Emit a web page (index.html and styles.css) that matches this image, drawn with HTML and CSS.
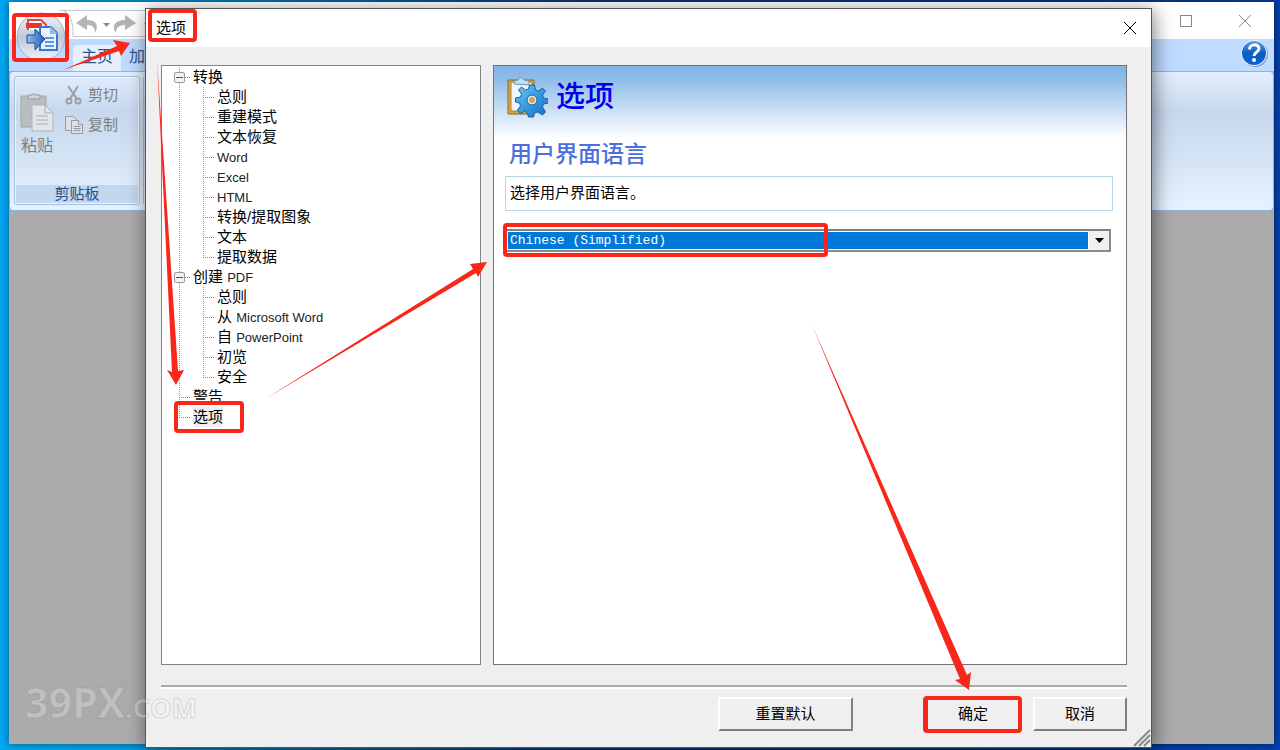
FILE: index.html
```
<!DOCTYPE html>
<html lang="zh-CN">
<head>
    <meta charset="UTF-8">
    <meta name="viewport" content="width=device-width, initial-scale=1.0">
    <title>选项</title>
    <link rel="stylesheet" href="styles.css">
</head>
<body>
    <div class="window">
        <header class="titlebar">
            <svg class="quick-bar" width="140" height="34" viewBox="0 0 140 34">
                <path d="M0 6.500H130M4 6.500Q15 10 14 32.500H140" fill="none" stroke="#c4c8ce"/>
                <path d="M17 19l11-8v5c10 0 12 6 8 13 0-6-3-8-8-8v5z" fill="#b4b4b4"/>
                <path d="M44 19h7l-3.500 4z" fill="#8b8b8b"/>
                <path d="M77 19l-11-8v5c-10 0-14 6-9 13 0-6 4-8 9-8v5z" fill="#b4b4b4"/>
                <path d="M85 19h6l-3 4z" fill="#8b8b8b"/>
            </svg>
            <button class="win-button" type="button" aria-label="最大化">
                <svg width="14" height="14"><rect x="1.500" y="1.500" width="11" height="11" fill="none" stroke="#888"/></svg>
            </button>
            <button class="win-button" type="button" aria-label="关闭">
                <svg width="14" height="14"><path d="M1 1l12 12M13 1L1 13" stroke="#888"/></svg>
            </button>
        </header>
        <nav class="tabs">
            <a class="tab active" href="#home">主页</a>
            <a class="tab" href="#advanced">加载</a>
            <button class="help" type="button" aria-label="帮助">
                <svg width="28" height="28" viewBox="0 0 28 28">
                    <defs>
                        <linearGradient id="helpFill" x1="0" y1="0" x2="0" y2="1">
                            <stop offset="0" stop-color="#5aa0e4"/>
                            <stop offset=".5" stop-color="#0a5cc4"/>
                            <stop offset="1" stop-color="#0a62d0"/>
                        </linearGradient>
                    </defs>
                    <circle cx="15" cy="15" r="13" fill="#8a9bb5"/>
                    <circle cx="14" cy="14" r="13" fill="#e8f1fc"/>
                    <circle cx="14" cy="14" r="12" fill="url(#helpFill)"/>
                    <path d="M9.500 10.500c0-6 9.500-6 9.500-1 0 4-5 3.500-5 7.500" fill="none" stroke="#fff" stroke-width="3"/>
                    <circle cx="14" cy="21" r="2" fill="#fff"/>
                </svg>
            </button>
        </nav>
        <section class="ribbon">
            <div class="group">
                <div class="group-tools">
                    <button class="tool paste" type="button">
                        <svg width="34" height="40" viewBox="0 0 34 40">
                            <path d="M1 4h25v31H1z" fill="#b9bcc0" stroke="#a3a6aa"/>
                            <path d="M8 7V3h4q2-3 4 0h4v4z" fill="#cfd2d6" stroke="#96999d"/>
                            <path d="M12 13h13l8 8v18H12z" fill="#e3e7ec" stroke="#aeb2b8"/>
                            <path d="M25 13v8h8M16 24h12M16 28h12M16 32h12" fill="none" stroke="#a9adb4"/>
                        </svg>
                        <span>粘贴</span>
                    </button>
                    <div class="tool-list">
                        <button class="tool" type="button">
                            <svg width="20" height="20" viewBox="0 0 20 20" fill="none" stroke="#9a9da3" stroke-width="2">
                                <path d="M4 1l9 13M14 1L6 14"/>
                                <circle cx="5" cy="16" r="2.500"/>
                                <circle cx="14" cy="16" r="2.500"/>
                            </svg>
                            <span>剪切</span>
                        </button>
                        <button class="tool" type="button">
                            <svg width="20" height="20" viewBox="0 0 20 20" fill="#dde1e7" stroke="#989ca2">
                                <path d="M1.500 1.500h8l4 4v10h-12z"/>
                                <path d="M7.500 5.500h7l4 4v9h-11z"/>
                                <path d="M14.500 5.500v4h4M9.500 11.500h7M9.500 13.500h7M9.500 15.500h7"/>
                            </svg>
                            <span>复制</span>
                        </button>
                    </div>
                </div>
                <div class="group-name">剪贴板</div>
            </div>
            <div class="group rest"></div>
        </section>
        <main class="workspace"></main>
        <button class="app-button" type="button" aria-label="应用程序菜单">
            <svg width="50" height="50" viewBox="0 0 50 50">
                <defs>
                    <linearGradient id="orb" x1="0" y1="0" x2="0" y2="1">
                        <stop offset="0" stop-color="#f3f6fa"/>
                        <stop offset=".5" stop-color="#bdc9da"/>
                        <stop offset="1" stop-color="#edf3fb"/>
                    </linearGradient>
                    <linearGradient id="orbArrow" x1="0" y1="0" x2="1" y2="0">
                        <stop offset="0" stop-color="#8dbdf0"/>
                        <stop offset="1" stop-color="#1e5db8"/>
                    </linearGradient>
                </defs>
                <circle cx="25" cy="25" r="24" fill="url(#orb)" stroke="#a2afc1"/>
                <path d="M12 18V8h13l5 5v5" fill="#fff" stroke="#e2453c" stroke-width="2"/>
                <path d="M10 11h16v5H10z" fill="#e8362d"/>
                <path d="M24 15h11l6 6v17H24z" fill="#e8f2fd" stroke="#3978cd" stroke-width="2"/>
                <path d="M34 14v8h8z" fill="#8bb9ee"/>
                <path d="M29 26h9M29 30h9M29 34h9" stroke="#5d98dc" stroke-width="2"/>
                <path d="M11 23h8v-6l10 10-10 11v-7h-8z" fill="url(#orbArrow)" stroke="#204b91"/>
            </svg>
        </button>
    </div>

    <form class="dialog">
        <header class="dialog-title">
            <h1>选项</h1>
            <button class="dialog-close" type="button" aria-label="关闭">
                <svg width="14" height="14"><path d="M1 1l12 12M13 1L1 13" stroke="#000"/></svg>
            </button>
        </header>
        <div class="dialog-body">
            <nav class="tree">
                <ul class="roots">
                    <li>
                        <div class="node branch"><button class="toggle" type="button" aria-label="折叠"></button><a href="#convert">转换</a></div>
                        <ul class="children">
                            <li class="node"><a href="#c1">总则</a></li>
                            <li class="node"><a href="#c2">重建模式</a></li>
                            <li class="node"><a href="#c3">文本恢复</a></li>
                            <li class="node"><a href="#c4"><span class="latin">Word</span></a></li>
                            <li class="node"><a href="#c5"><span class="latin">Excel</span></a></li>
                            <li class="node"><a href="#c6"><span class="latin">HTML</span></a></li>
                            <li class="node"><a href="#c7">转换/提取图象</a></li>
                            <li class="node"><a href="#c8">文本</a></li>
                            <li class="node"><a href="#c9">提取数据</a></li>
                        </ul>
                    </li>
                    <li>
                        <div class="node branch"><button class="toggle" type="button" aria-label="折叠"></button><a href="#create">创建 <span class="latin">PDF</span></a></div>
                        <ul class="children">
                            <li class="node"><a href="#p1">总则</a></li>
                            <li class="node"><a href="#p2">从 <span class="latin">Microsoft Word</span></a></li>
                            <li class="node"><a href="#p3">自 <span class="latin">PowerPoint</span></a></li>
                            <li class="node"><a href="#p4">初览</a></li>
                            <li class="node"><a href="#p5">安全</a></li>
                        </ul>
                    </li>
                    <li class="node"><a href="#warnings">警告</a></li>
                    <li class="node"><a class="selected" href="#options">选项</a></li>
                </ul>
            </nav>
            <section class="panel">
                <div class="panel-head">
                    <svg width="42" height="42" viewBox="0 0 42 42">
                        <defs>
                            <linearGradient id="gear" x1="0" y1="0" x2="1" y2="1">
                                <stop offset="0" stop-color="#6cc5f7"/>
                                <stop offset="1" stop-color="#0a6fc6"/>
                            </linearGradient>
                        </defs>
                        <path d="M2 4h26v34H2z" fill="#d6a33c" stroke="#8a6a2b"/>
                        <path d="M5 6h21v29H5z" fill="#f1f5fa" stroke="#b08435"/>
                        <path d="M8 8V5l4-1q3-5 6 0l5 1v4z" fill="#bfe0f6" stroke="#6f93ae"/>
                        <g fill="url(#gear)" stroke="#1562a5">
                            <path d="M23.500 9h5l1 5 3 1 4-3 3 3-3 4 1 3 5 1v4l-5 1-1 3 3 5-3 3-5-3-3 1-1 4h-5l-1-4-3-2-4 3-3-4 3-4-1-3-4-1v-4l5-1 1-3-3-4 3-3 4 3 3-1z"/>
                            <circle cx="26" cy="24" r="5" fill="#dce9f3"/>
                        </g>
                        <circle cx="26" cy="24" r="3" fill="#d0a84e"/>
                    </svg>
                    <h2>选项</h2>
                </div>
                <div class="panel-content">
                    <h3><label for="language">用户界面语言</label></h3>
                    <p class="hint">选择用户界面语言。</p>
                    <div class="combo">
                        <select id="language" name="language">
                            <option>Chinese (Simplified)</option>
                            <option>English</option>
                        </select>
                        <span class="combo-arrow"><svg width="9" height="5"><path d="M0 0h9L4.500 5z"/></svg></span>
                    </div>
                </div>
            </section>
        </div>
        <footer class="dialog-footer">
            <button class="push wide" type="reset">重置默认</button>
            <button class="push ok" type="submit">确定</button>
            <button class="push" type="button">取消</button>
        </footer>
        <svg class="grip" width="18" height="18" viewBox="0 0 18 18">
            <path d="M1 17L17 1M6 17L17 6M11 17l6-6" stroke="#888" stroke-width="2"/>
        </svg>
    </form>

    <svg class="marks" width="1280" height="750" viewBox="0 0 1280 750">
        <g fill="none" stroke="#f8271a" stroke-width="4">
            <rect x="14" y="15" width="53" height="45" rx="2"/>
            <rect x="150" y="11" width="45" height="29" rx="2"/>
            <rect x="176" y="403" width="66" height="28" rx="2"/>
            <rect x="505" y="225" width="321" height="30" rx="2"/>
            <rect x="925" y="698" width="95" height="33" rx="2"/>
        </g>
        <g fill="#f8271a">
            <path d="M63 70L117 46 113 40 130 43 121 56 119 51z"/>
            <path d="M157 60L178 371 184 370 176 385 167 370 172 372z"/>
            <path d="M265 399L473 269 470 264 487 262 478 277 476 273z"/>
            <path d="M812 325L967 675 971 672 969 690 955 680 960 679z"/>
        </g>
    </svg>
    <div class="watermark">39PX<small>.COM</small></div>
</body>
</html>
```
FILE: styles.css
```
* {
    box-sizing: border-box;
}
body {
    margin: 0;
    height: 100vh;
    overflow: hidden;
    position: relative;
    font-family: "Liberation Sans", "Noto Sans CJK SC", sans-serif;
    font-size: 15px;
    line-height: 20px;
    color: #000;
    background: linear-gradient(to right, #00a8f3 0, #00a2ea 10%, #103f80 45%, #0b3a92 75%, #0440ae 100%);
}
button {
    padding: 0;
    border: none;
    background: none;
    font: inherit;
}
a {
    color: inherit;
    text-decoration: none;
}
h1, h2, h3, p, ul {
    margin: 0;
    padding: 0;
    font-weight: normal;
}
ul {
    list-style: none;
}
svg {
    display: block;
}

/* main window */
.window {
    position: absolute;
    inset: 2px 6px 6px 9px;
    display: flex;
    flex-direction: column;
    background: #ababab;
    box-shadow: 0 0 8px rgba(0, 0, 0, 0.5);
}
.titlebar {
    display: flex;
    align-items: center;
    justify-content: flex-end;
    height: 37px;
    background: #fff;
}
.quick-bar {
    margin: 0 auto 0 50px;
}
.win-button {
    width: 59px;
    display: flex;
    justify-content: center;
}
.tabs {
    display: flex;
    align-items: flex-end;
    height: 32px;
    padding: 0 6px 0 64px;
    background: #bfdbff;
    color: #2d558f;
    font-size: 16px;
}
.tab {
    padding: 2px 8px 4px;
    line-height: 20px;
}
.tab.active {
    border-radius: 4px 4px 0 0;
    background: #e6f0fd;
}
.help {
    margin-left: auto;
    align-self: flex-start;
}
.ribbon {
    display: flex;
    gap: 3px;
    height: 140px;
    padding: 4px 2px 5px 4px;
    border: 1px solid #8db2e3;
    border-radius: 4px;
    background: linear-gradient(#e3effd 0, #c7d8ee 28%, #d3e2f4 60%, #e6f2ff 100%);
}
.group {
    display: flex;
    flex-direction: column;
    justify-content: space-between;
    width: 126px;
    border: 1px solid #a8bfdc;
    border-radius: 3px;
    box-shadow: inset 0 0 0 1px #eef5fd;
}
.group.rest {
    flex: 1;
    border-color: transparent transparent transparent #a8bfdc;
    box-shadow: none;
}
.group-tools {
    display: flex;
    gap: 10px;
    padding: 6px 5px;
    color: #7d7f83;
}
.tool {
    display: flex;
    align-items: center;
    gap: 4px;
    color: inherit;
}
.paste {
    flex-direction: column;
    padding-top: 9px;
    font-size: 16px;
}
.tool-list {
    display: flex;
    flex-direction: column;
    gap: 10px;
    padding-top: 2px;
}
.group-name {
    margin: 1px;
    line-height: 18px;
    text-align: center;
    color: #2a4f8c;
    background: #c1d8ef;
}
.workspace {
    flex: 1;
}
.app-button {
    position: absolute;
    left: 7px;
    top: 10px;
}

/* options dialog */
.dialog {
    position: absolute;
    inset: 8px 128px 2px 145px;
    display: flex;
    flex-direction: column;
    border: 1px solid #555;
    background: #efefef;
    box-shadow: 2px 3px 18px rgba(0, 0, 0, 0.5);
}
.dialog-title {
    display: flex;
    align-items: center;
    justify-content: space-between;
    height: 38px;
    padding: 0 14px 0 10px;
    background: #fff;
}
.dialog-title h1 {
    font-size: 15px;
}
.dialog-body {
    flex: 1;
    display: flex;
    gap: 12px;
    padding: 18px 24px 20px 15px;
}
.tree {
    width: 320px;
    padding: 1px 11px;
    border: 1px solid #82858c;
    background: #fff;
}
.node {
    position: relative;
    display: flex;
    align-items: center;
    height: 20px;
    padding-left: 20px;
    white-space: pre;
}
.node a {
    display: block;
    line-height: 20px;
}
.node .latin {
    font-size: 13px;
    color: #222;
}
.node::before {
    content: "";
    position: absolute;
    left: 6px;
    width: 11px;
    border-top: 1px dotted #888;
}
.roots {
    background: linear-gradient(#999 50%, transparent 50%) 6px 10px / 1px 2px repeat-y;
}
.roots > li:last-child {
    background: linear-gradient(#fff, #fff) 6px 11px / 1px 9px no-repeat;
}
.children {
    margin-left: 24px;
    background: linear-gradient(#999 50%, transparent 50%) 6px 0 / 1px 2px repeat-y;
}
.children .node:last-child {
    background: linear-gradient(#fff, #fff) 6px 11px / 1px 9px no-repeat;
}
.toggle {
    position: absolute;
    left: 1px;
    width: 11px;
    height: 11px;
    border: 1px solid #999;
    border-radius: 2px;
    background: linear-gradient(#34569e, #34569e) center / 7px 1px no-repeat #f3f3f3;
}
.node .selected {
    background: #efefef;
}
.panel {
    flex: 1;
    border: 1px solid #707379;
    background: linear-gradient(#82b3e6 0, #94bfea 16px, #fff 72px);
}
.panel-head {
    display: flex;
    align-items: center;
    gap: 8px;
    padding: 10px 12px 0;
}
.panel-head h2 {
    font-size: 29px;
    font-weight: 500;
    line-height: 42px;
    color: #0000f0;
}
.panel-content {
    padding: 20px 13px 0 11px;
}
.panel-content h3 {
    padding-left: 4px;
    font-size: 23px;
    font-weight: 500;
    line-height: 32px;
    color: #4b6fe0;
}
.hint {
    margin: 6px 0 18px;
    padding: 6px 4px;
    height: 35px;
    border: 1px solid #b5d9e4;
    background: #fff;
}
.combo {
    display: flex;
    height: 23px;
    margin-right: 2px;
    border: 2px solid;
    border-color: #808080 #8a8a8a #8a8a8a #808080;
    background: #fff;
}
.combo select {
    flex: 1;
    appearance: none;
    margin: 1px;
    padding: 0 2px;
    border: none;
    border-radius: 0;
    outline: none;
    background: #0078d7;
    color: #fff;
    font: 13px "Liberation Mono", monospace;
}
.combo-arrow {
    display: flex;
    align-items: center;
    justify-content: center;
    width: 20px;
    background: #f0f0f0;
    pointer-events: none;
}
.dialog-footer {
    display: flex;
    justify-content: flex-end;
    margin: 0 24px 16px 15px;
    padding-top: 10px;
    border-top: 2px solid #a9a9a9;
    box-shadow: inset 0 2px #fff;
}
.push {
    width: 94px;
    height: 34px;
    border: 2px solid;
    border-color: #fff #808080 #808080 #fff;
}
.push.wide {
    width: 135px;
    margin-right: 73px;
}
.push.ok {
    margin-right: 13px;
    border-color: #666;
}
.grip {
    position: absolute;
    right: 0;
    bottom: 0;
}

/* arrows and frames over the windows */
.marks {
    position: absolute;
    left: 0;
    top: 0;
    pointer-events: none;
}
.watermark {
    position: absolute;
    left: 25px;
    bottom: 22px;
    font: bold 41px/41px "Open Sans", "Noto Sans", sans-serif;
    color: rgba(255, 255, 255, 0.25);
    -webkit-text-stroke: 1px rgba(120, 120, 120, 0.25);
}
.watermark small {
    font-size: 27px;
}
```
